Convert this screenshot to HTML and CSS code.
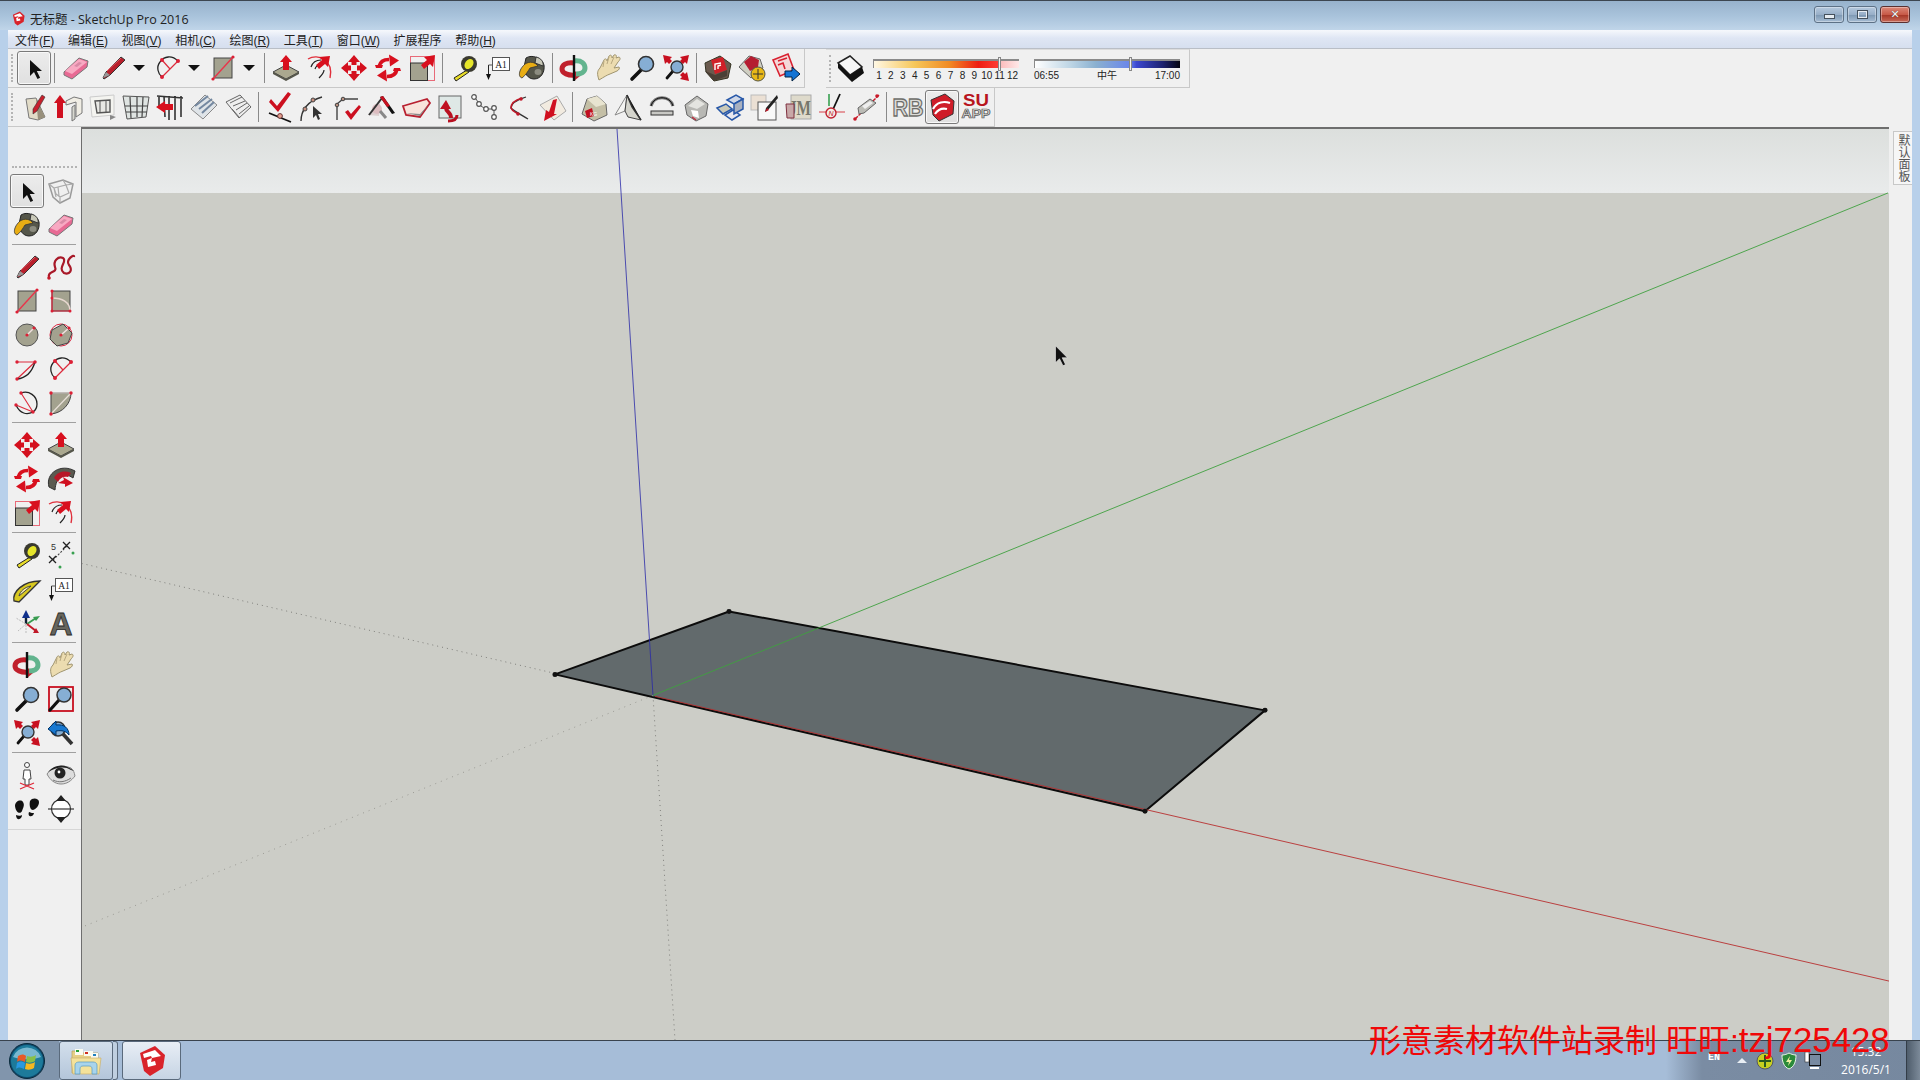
FILE: index.html
```html
<!DOCTYPE html>
<html lang="zh">
<head>
<meta charset="utf-8">
<title>无标题 - SketchUp Pro 2016</title>
<link rel="stylesheet" href="styles.css">
</head>
<body>
<svg class="defs" aria-hidden="true">
<defs>
<symbol id="select" viewBox="0 0 32 32"><path d="M12 8v16l4-4 3.5 7 2.6-1.2-3.3-6.8h5.2z" fill="#111"/></symbol>
<symbol id="eraser" viewBox="0 0 32 32"><path d="M4 20 19 6l9 3-1 6-15 12-8-4z" fill="#e86a94" stroke="#777"/><path d="M5 19 19 7l8 3-15 12z" fill="#f8a9c2"/><path d="m14 14 5-4 3 1-5 4z" fill="#d98aa6"/></symbol>
<symbol id="pencil" viewBox="0 0 32 32"><path d="m24 5 4 3-15 15-6 4-1-1 3-6z" fill="#b8202c" stroke="#333"/><path d="m6 26 3-6 4 3z" fill="#999"/><path d="m10 19 14-13" stroke="#e8606a"/></symbol>
<symbol id="arc2" viewBox="0 0 32 32"><path d="M26 9C20 3 12 4 8 10c-4 5-2 12 2 15" fill="none" stroke="#222" stroke-width="1.3"/><path d="M10 25 26 9M10 8l8 9" stroke="#dc2b3c" stroke-width="1.2"/><g fill="#dc2036"><circle cx="10" cy="8" r="2"/><circle cx="26" cy="9" r="2"/><circle cx="10" cy="25" r="2"/></g></symbol>
<symbol id="rect" viewBox="0 0 32 32"><rect x="7" y="6" width="18" height="20" fill="#a3a28f" stroke="#444"/><path d="M6 27 26 5" stroke="#e8354a" stroke-width="1.4"/><g fill="#dc2036"><circle cx="6" cy="27" r="1.6"/><circle cx="26" cy="5" r="1.6"/></g></symbol>
<symbol id="push" viewBox="0 0 32 32"><path d="m3 20 13-7 13 7-13 7z" fill="#aaa88f" stroke="#444"/><path d="M3 20v2l13 7 13-7v-2l-13 7z" fill="#55564a"/><path d="m16 3 6 7h-3v8h-6v-8h-3z" fill="#d8101e"/></symbol>
<symbol id="follow" viewBox="0 0 32 32"><path d="M4 7c10-6 26 1 22 19" fill="none" stroke="#e0303c" stroke-width="1.4"/><path d="M7 15c2-6 6-7 10-7M15 26c3-3 5-6 5-8M11 17c1-3 3-4 5-4" fill="none" stroke="#222" stroke-width="1.2"/><path d="m26 4-2 11-3-3-6 5-3-4 6-5-3-3z" fill="#d8101e"/></symbol>
<symbol id="move" viewBox="0 0 32 32"><g fill="#d4101e"><path d="m16 3 6 7h-3.500v3h-5v-3H10z"/><path d="m16 29-6-7h3.500v-3h5v3H22z"/><path d="m3 16 7-6v3.500h3v5h-3V22z"/><path d="m29 16-7 6v-3.500h-3v-5h3V10z"/></g></symbol>
<symbol id="rotate" viewBox="0 0 32 32"><g fill="none" stroke="#d8101e" stroke-width="3.600"><path d="M7 14.500C8 10 12 7.500 17 7.500"/><path d="M25 17.500C24 22 20 24.500 15 24.500"/></g><g fill="#d8101e"><path d="m17 2.500 10 6-9 6z"/><path d="m15 29.500-10-6 9-6z"/><path d="m3 13 8 0-1 3H4z"/><path d="m29 19-8 0 1-3h6z"/></g></symbol>
<symbol id="scale" viewBox="0 0 32 32"><rect x="4.500" y="4.500" width="24" height="24" fill="none" stroke="#e86a78"/><rect x="4.500" y="11" width="17" height="17.500" fill="#a3a28f" stroke="#333"/><path d="m29 3-2 12-3-3-6 5-3-4 6-5-3-3z" fill="#d8101e"/></symbol>
<symbol id="tape" viewBox="0 0 32 32"><path d="m19 18-13 8 2 3 13-9z" fill="#e8dc28" stroke="#222"/><circle cx="21" cy="12" r="8" fill="#3a3a30"/><ellipse cx="21" cy="12" rx="4" ry="5.500" transform="rotate(35 21 12)" fill="#e6e62a"/></symbol>
<symbol id="atext" viewBox="0 0 32 32"><rect x="10.500" y="5.500" width="17" height="13" fill="#fff" stroke="#555"/><text x="19" y="15.500" font-family="Liberation Serif" font-size="9.500" text-anchor="middle" fill="#222">A1</text><path d="M6.500 13v13" stroke="#222"/><path d="m4 22 5 0-2.500 6z" fill="#111"/><path d="M6.500 13h4" stroke="#555"/></symbol>
<symbol id="bucket" viewBox="0 0 32 32"><path d="M10 6c6-4 16 0 18 7 1 7-3 14-10 14-6 0-10-6-10-12z" fill="#55564a" stroke="#222"/><path d="M20 5c5 1 8 5 7 9l-8-3z" fill="#c8c8b8" stroke="#333"/><ellipse cx="22" cy="20" rx="3.500" ry="3" fill="#8c8c80"/><path d="M9 12c5-3 10-2 13 2l-8 2c-2 3-4 7-8 10-3-1-3-4-2-7 1-3 3-5 5-7z" fill="#e8ad14" stroke="#333" stroke-width=".8"/></symbol>
<symbol id="orbit" viewBox="0 0 32 32"><path d="M16 11C8 10 4 13 4 17c0 4 6 7 14 6" fill="none" stroke="#c0202c" stroke-width="5"/><path d="m16 18 6 6-6 5z" fill="#c0202c"/><path d="M16 9c8-1 11 3 11 7 0 4-4 6-9 6" fill="none" stroke="#62b48e" stroke-width="5"/><path d="M16 3v26" stroke="#111" stroke-width="2.400"/></symbol>
<symbol id="hand" viewBox="0 0 32 32"><path d="M7 28c-2-6-2-9 1-12l4-8c1-2 3-1 3 1l2-5c2-2 3 0 3 2l2-3c2-1 3 1 2 3l3-1c2 1 1 3-1 5l-4 6 5-1c1 1 0 3-2 4l-7 3c-3 1-6 3-11 6z" fill="#ecdcb0" stroke="#a09570"/><path d="m12 9-1 6M17 5l-2 7M22 5l-3 7" stroke="#b8a880" fill="none"/></symbol>
<symbol id="zoom" viewBox="0 0 32 32"><path d="m16 17-10 10" stroke="#111" stroke-width="3.600" stroke-linecap="round"/><circle cx="20" cy="12" r="7.500" fill="#86aed4" stroke="#333" stroke-width="1.600"/></symbol>
<symbol id="zoomext" viewBox="0 0 32 32"><path d="m13 19-6 7" stroke="#111" stroke-width="2.800" stroke-linecap="round"/><circle cx="17" cy="15" r="6" fill="#86aed4" stroke="#333" stroke-width="1.400"/><g fill="#c81020"><path d="m3 3 9 2-2 2 2 2-3 3-2-2-2 2z"/><path d="m29 3-2 9-2-2-2 2-3-3 2-2-2-2z"/><path d="m29 29-9-2 2-2-2-2 3-3 2 2 2-2z"/></g></symbol>
<symbol id="ware" viewBox="0 0 32 32"><path d="m3 11 15-7 11 8-3 14-14 3-8-9z" fill="#6a5a4e" stroke="#332"/><path d="m9 8 12-3 4 13-12 4z" fill="#d02028"/><path d="M13 18v-6l6-1M16 17v-3l3-1" fill="none" stroke="#fff" stroke-width="1.400"/><path d="m3 19 10 4 12-5v6l-13 5z" fill="#4a4036"/></symbol>
<symbol id="share" viewBox="0 0 32 32"><path d="m3 15 10-11 11 3 3 9-12 10z" fill="#cfcfc2" stroke="#666"/><path d="m8 10 7-6 8 4-1 7-8 4z" fill="#b51c30"/><circle cx="22" cy="22" r="7" fill="#e8b818" stroke="#554"/><path d="M22 17v10M17 22h10" stroke="#333"/></symbol>
<symbol id="layout" viewBox="0 0 32 32"><path d="m3 8 15-6 6 16-14 6z" fill="#f4d8d8" stroke="#d82030" stroke-width="1.600"/><path d="M8 9l9-3M8 13l5-2 2 6" fill="none" stroke="#d82030" stroke-width="1.600"/><path d="M15 19h7v-4l8 7-8 7v-4h-7z" fill="#1474d4" stroke="#024"/></symbol>
<symbol id="sb" viewBox="0 0 32 32"><path d="m4 10 12-7 12 11-12 8z" fill="#f6f6f6" stroke="#222" stroke-width="1.500"/><path d="m4 10 0 5 14 14 12-9-2-6-12 8z" fill="#111"/></symbol>
<symbol id="w1" viewBox="0 0 32 32"><path d="m8 8 10-1 9 19-7 3-9-2z" fill="#e2dcc8" stroke="#777"/><path d="m20 29-2-22 9 19z" fill="#98907c"/><path d="m24 4 3 2-8 14-4 3 0-5z" fill="#c8202c" stroke="#333" stroke-width=".6"/></symbol>
<symbol id="w2" viewBox="0 0 32 32"><path d="m14 10 8-4 8 2v14l-6 4v-15l-10 3z" fill="#f0ede4" stroke="#777"/><path d="M20 16v14l3-2V14z" fill="#d8d8d0" stroke="#777"/><path d="m8 4 6 8h-3v15H5V12H2z" fill="#d01020"/></symbol>
<symbol id="w3" viewBox="0 0 32 32"><path d="m4 6 24-2v20l-22 2z" fill="#f4f4f0" stroke="#ccc"/><path d="m9 10 15-1v12l-13 1z" fill="#e8e8e4" stroke="#555" stroke-width="1.400"/><path d="M14 10v12M20 10v11" stroke="#555"/><path d="m24 24 6 2-6 3z" fill="#888"/></symbol>
<symbol id="w4" viewBox="0 0 32 32"><path d="m3 5 26 1-3 20-19 2z" fill="#dfe4e2" stroke="#555"/><path d="M10 6l1 21M17 6l0 20M23 6l-1 20M5 15h23M6 21h21" stroke="#444" stroke-width="1.200"/></symbol>
<symbol id="w5" viewBox="0 0 32 32"><path d="M5 5v12M10 5l1 21M15 5v24M21 5v24M27 5v21M3 5l26 2" stroke="#333" stroke-width="1.600"/><path d="m2 16 9-6v3h8v6h-8v3z" fill="#d8101e"/></symbol>
<symbol id="w6" viewBox="0 0 32 32"><path d="m3 18 14-14 12 10-14 14z" fill="#dfe4e8" stroke="#888"/><path d="m7 15 13-10M11 18 24 8M14 22 26 11" stroke="#7488a0" stroke-width="2"/></symbol>
<symbol id="w7" viewBox="0 0 32 32"><path d="m4 11 14-7 11 12-12 11z" fill="#eee" stroke="#666"/><path d="m8 12 12-6M11 15l12-5M14 19l11-7M17 23l10-8M10 18l8 9" stroke="#666"/></symbol>
<symbol id="w8" viewBox="0 0 32 32"><path d="m5 22 22 9" stroke="#111" stroke-width="1.800"/><path d="m8 10 6 7 11-14 3 2-13 18-9-10z" fill="#cc1020" transform="translate(-1 -2)"/><circle cx="16" cy="25" r="2.400" fill="#e8a090" stroke="#633"/></symbol>
<symbol id="w9" viewBox="0 0 32 32"><path d="M3 30c0-10 6-20 21-24" fill="none" stroke="#333" stroke-width="1.400"/><circle cx="7" cy="18" r="2" fill="#c89080" stroke="#444"/><circle cx="15" cy="9" r="2" fill="#c89080" stroke="#444"/><path d="m15 15 0 12 3-3 2 5 2-1-2-5 4 0z" fill="#333"/></symbol>
<symbol id="w10" viewBox="0 0 32 32"><path d="M5 29V13l6-5h15" fill="none" stroke="#444" stroke-width="1.400"/><circle cx="5" cy="14" r="1.800" fill="#b89080" stroke="#444"/><circle cx="11" cy="8" r="1.800" fill="#b89080" stroke="#444"/><path d="m13 21 3-2 3 4 8-9 2 2-10 13z" fill="#cc1020"/></symbol>
<symbol id="w11" viewBox="0 0 32 32"><path d="M2 24 14 12l-1 13z" fill="#d8c8c8" opacity=".8"/><circle cx="11" cy="18" r="5" fill="#dcbcc0"/><path d="M3 24 16 7" stroke="#333" stroke-width="2"/><path d="m14 6 3-1 12 17-3 1z" fill="#111"/><path d="m14 6 3-1 7 10-3 1z" fill="#c81020"/><path d="m14 20 6 7" stroke="#888" stroke-width="3"/></symbol>
<symbol id="w12" viewBox="0 0 32 32"><path d="m3 15 24-7 3 4-10 14-14-2z" fill="#f8e4dc" stroke="#b82030" stroke-width="1.800"/><path d="m6 22 14 3 9-12-9 10z" fill="#888"/></symbol>
<symbol id="w13" viewBox="0 0 32 32"><rect x="5" y="5" width="22" height="22" fill="#dfe8e6" stroke="#666"/><path d="M17 27c0-6-5-6-5-10" fill="none" stroke="#b81020" stroke-width="4"/><path d="m12 9-6 9h11z" fill="#c01020"/><path d="M14 30c6 0 9-2 9-6" fill="none" stroke="#b81020" stroke-width="3"/></symbol>
<symbol id="w14" viewBox="0 0 32 32"><g fill="#fff" stroke="#555" stroke-width="1.200"><circle cx="6" cy="6" r="2.300"/><circle cx="11" cy="13" r="2.300"/><circle cx="18" cy="18" r="2.300"/><circle cx="26" cy="17" r="2.300"/><circle cx="26" cy="26" r="2.300"/></g><path d="m8 8 2 3M13 15l3 2M20 18h4M26 19v5" stroke="#555"/></symbol>
<symbol id="w15" viewBox="0 0 32 32"><path d="M24 6C15 9 9 13 9 17c3 3 9 6 17 11" fill="none" stroke="#333" stroke-width="1.300"/><path d="M20 7c-7 2-11 6-11 10 1 3 4 4 7 6" fill="none" stroke="#c01828" stroke-width="1.500"/><circle cx="19" cy="8" r="1.800" fill="#c01828"/><circle cx="16" cy="23" r="1.800" fill="#c01828"/></symbol>
<symbol id="w16" viewBox="0 0 32 32"><path d="m4 14 17-9 9 15-12 9z" fill="#f2ebe0" stroke="#aaa"/><path d="m24 8-3 15 3 0-13 7 2-11 3 2 4-12z" fill="#d01020" transform="translate(-3 0)"/></symbol>
<symbol id="m1" viewBox="0 0 32 32"><path d="m4 23 5-15 10-3 9 8 1 11-13 6z" fill="#c4bfa6" stroke="#666"/><path d="m9 8 10-3 9 8-10 3z" fill="#e8e4d0"/><path d="m7 20 7-3 2 8-7 2z" fill="#c01020"/><text x="12" y="25" font-family="Liberation Sans" font-size="5" fill="#fff">KG</text></symbol>
<symbol id="m2" viewBox="0 0 32 32"><path d="M3 24 15 4l-2 16z" fill="#f4f4f2" stroke="#888"/><path d="m15 4 14 25-13-3-3-6z" fill="#d4d4cc" stroke="#444"/><path d="m15 4 5 12 9 13" stroke="#333" stroke-width="1.500"/></symbol>
<symbol id="m3" viewBox="0 0 32 32"><path d="M5 15C8 4 24 4 27 15" fill="none" stroke="#777" stroke-width="3"/><path d="M5 15C8 4 24 4 27 15" fill="none" stroke="#111" stroke-width="1"/><rect x="5" y="20" width="22" height="4" fill="#c8c8c4" stroke="#333"/></symbol>
<symbol id="m4" viewBox="0 0 32 32"><path d="m5 14 12-9 11 8-2 12-10 5-9-6z" fill="#b8b8b4" stroke="#666"/><path d="m8 15 9-7 8 5-8 5z" fill="#e4e4e0"/><path d="m11 19 7 1 1 7-6-2z" fill="#fff"/><path d="m12 26 4 3" stroke="#c03040" stroke-width="1.500"/></symbol>
<symbol id="m5" viewBox="0 0 32 32"><path d="m3 17 9-4 6 5-9 5z" fill="#c8c8b8" stroke="#2858a8" stroke-width="1.500"/><path d="m13 9 9-5 7 4-9 5z" fill="#d0d8e8" stroke="#2858a8" stroke-width="1.500"/><path d="m11 24 8-5 7 5-8 5z" fill="#e8e8f0" stroke="#2858a8" stroke-width="1.500"/><path d="m20 13 9-5v10l-9 5z" fill="#a8b0c0" stroke="#2858a8" stroke-width="1.500"/></symbol>
<symbol id="m6" viewBox="0 0 32 32"><rect x="3" y="4" width="15" height="15" fill="#ebe0d4" stroke="#bbb"/><rect x="10" y="11" width="18" height="18" fill="#f8f8f8" stroke="#555"/><path d="m29 4 1 3-10 12-3 2 1-4z" fill="#222"/><path d="m17 21 2-4 2 2z" fill="#c01020"/></symbol>
<symbol id="m7" viewBox="0 0 32 32"><rect x="9" y="4" width="20" height="24" fill="#dedacb" stroke="#aaa"/><text x="18" y="24" font-family="Liberation Serif" font-size="20" font-weight="700" text-anchor="middle" fill="#77776c" textLength="22" lengthAdjust="spacingAndGlyphs">JM</text><path d="M4 13h8v14H5z" fill="#c8a8a8" stroke="#803040"/></symbol>
<symbol id="m8" viewBox="0 0 32 32"><path d="M13 3v12" stroke="#38a050" stroke-width="1.600"/><path d="M24 3 14 25" stroke="#111" stroke-width="1.800"/><path d="M3 21h26" stroke="#d84048"/><circle cx="15" cy="22" r="5" fill="#f4ece4" stroke="#c02030" stroke-width="1.400"/><text x="15" y="25" font-family="Liberation Sans" font-size="7" font-style="italic" text-anchor="middle" fill="#c02030">N</text></symbol>
<symbol id="m9" viewBox="0 0 32 32"><path d="m5 28 24-24" stroke="#c81828" stroke-width="1.400" stroke-dasharray="4 1"/><path d="m8 17 12-9 6 4-12 10-5 1z" fill="#bcbcb6" stroke="#666"/><path d="m12 15 8-5 3 2-8 6z" fill="#eee"/><circle cx="5" cy="28" r="1.800" fill="#c81828"/><circle cx="27" cy="5" r="1.800" fill="#c81828"/></symbol>
<symbol id="rb" viewBox="0 0 32 32"><text x="16" y="25" font-family="Liberation Sans" font-size="24" font-weight="700" text-anchor="middle" fill="#dcdcd8" stroke="#6e6e6a" stroke-width="1.300" textLength="31" lengthAdjust="spacingAndGlyphs">RB</text></symbol>
<symbol id="sulogo" viewBox="0 0 32 32"><path d="M5 9 19 3l9 7-1 13-14 7-6-6z" fill="#cf1c28" stroke="#333"/><path d="M7 18c4-7 11-8 17-6M9 23c4-6 8-6 12-5" fill="none" stroke="#fff" stroke-width="2.200"/></symbol>
<symbol id="suapp" viewBox="0 0 32 32"><text x="16" y="15" font-family="Liberation Sans" font-size="17" font-weight="700" text-anchor="middle" fill="#b8141e" textLength="26" lengthAdjust="spacingAndGlyphs">SU</text><text x="16" y="27" font-family="Liberation Sans" font-size="12" font-weight="700" text-anchor="middle" fill="#dededa" stroke="#555" stroke-width=".7" textLength="29" lengthAdjust="spacingAndGlyphs">APP</text></symbol>
<symbol id="comp" viewBox="0 0 32 32"><path d="M4 9l14-4 10 4-3 14-10 5-7-6z" fill="none" stroke="#9a9a9a" stroke-width="1.500"/><path d="M9 13l12-3 3 8-9 4-4-3zM4 9l5 4M28 9l-7 1M15 28v-6M11 22l-2-9M18 5l3 5M13 12l1 9" fill="none" stroke="#aaa" stroke-width="1.200"/></symbol>
<symbol id="free" viewBox="0 0 32 32"><path d="M4 26c-2-6 9-4 6-10-2-6 3-11 8-9 5 3-6 10 1 15 6 2 9-3 5-8-4-5 6-12 5-8" fill="none" stroke="#a81828" stroke-width="2.200"/><circle cx="4" cy="27" r="1.800" fill="#c81828"/></symbol>
<symbol id="rrect" viewBox="0 0 32 32"><rect x="7" y="6" width="18" height="20" fill="#a3a28f" stroke="#444"/><path d="M7 13c10 0 18 4 18 13" fill="none" stroke="#e8d8d0" stroke-width="1.500"/><path d="M7 5v21h18" fill="none" stroke="#e02840" stroke-width="1.200"/><g fill="#dc2036"><circle cx="7" cy="6" r="1.500"/><circle cx="7" cy="13" r="1.500"/><circle cx="7" cy="26" r="1.500"/><circle cx="25" cy="26" r="1.500"/></g></symbol>
<symbol id="circle" viewBox="0 0 32 32"><circle cx="16" cy="16" r="11" fill="#a3a28f" stroke="#555"/><path d="m16 16 7-7" stroke="#f0e0e0" stroke-width="1.500"/><circle cx="16" cy="16" r="1.600" fill="#dc2036"/><circle cx="23" cy="9" r="1.600" fill="#dc2036"/></symbol>
<symbol id="poly" viewBox="0 0 32 32"><circle cx="16" cy="16" r="11" fill="none" stroke="#d82840"/><path d="m7 11 11-6 9 9-4 10-11 3-7-7z" fill="#a3a28f" stroke="#444"/><path d="m16 16 8-7" stroke="#f0e0e0" stroke-width="1.500"/><circle cx="16" cy="16" r="1.600" fill="#dc2036"/><circle cx="24" cy="9" r="1.600" fill="#dc2036"/></symbol>
<symbol id="arc1" viewBox="0 0 32 32"><path d="M6 9h18L6 26" fill="none" stroke="#dc2b3c" stroke-width="1.200"/><path d="M6 26c10-1 15-7 18-17" fill="none" stroke="#222" stroke-width="1.300"/><g fill="#dc2036"><circle cx="6" cy="9" r="1.700"/><circle cx="24" cy="9" r="1.700"/><circle cx="6" cy="26" r="1.700"/></g></symbol>
<symbol id="arc3" viewBox="0 0 32 32"><path d="m5 18 17 7M10 6l12 19" fill="none" stroke="#dc2b3c" stroke-width="1.100"/><path d="M10 6c8-3 16 3 16 11 0 3-1 6-4 8-6 3-13 2-17-7" fill="none" stroke="#222" stroke-width="1.300"/><g fill="#dc2036"><circle cx="10" cy="6" r="1.700"/><circle cx="5" cy="18" r="1.700"/><circle cx="22" cy="25" r="1.700"/></g></symbol>
<symbol id="sector" viewBox="0 0 32 32"><path d="M6 6h20c0 10-8 20-20 21z" fill="#a3a28f" stroke="#444"/><path d="M6 6h20L6 27" fill="none" stroke="#e8e0d8" stroke-width="1.200"/><g fill="#dc2036"><circle cx="6" cy="27" r="1.700"/><circle cx="26" cy="6" r="1.700"/><circle cx="6" cy="6" r="1.700"/></g></symbol>
<symbol id="swoosh" viewBox="0 0 32 32"><path d="M4 24C0 10 16 0 30 8l-2 7C18 8 11 14 10 27z" fill="#5a5a50" stroke="#333"/><path d="M9 15c3-6 10-8 17-5l-3 4c-5-1-8 1-10 5z" fill="#b81828"/><path d="m18 14 10 6-8 4 0-3-7-1 6-3z" fill="#d01020"/></symbol>
<symbol id="dim" viewBox="0 0 32 32"><path d="m8 21 14-14" stroke="#444" stroke-dasharray="2 1.500" stroke-width="1.100"/><path d="m18 3 7 7M25 3l-7 7M4 17l7 7M11 17l-7 7" stroke="#222" stroke-width="1.300"/><circle cx="28" cy="14" r="1.500" fill="#38a050"/><circle cx="15" cy="28" r="1.500" fill="#38a050"/><text x="6" y="11" font-family="Liberation Sans" font-size="9" fill="#333">5</text></symbol>
<symbol id="proto" viewBox="0 0 32 32"><path d="M3 28c-2-9 9-20 26-20L8 29z" fill="#d8c820" stroke="#333" stroke-width="1.400"/><path d="M8 23c1-5 6-9 12-10z" fill="#f4ecb0" stroke="#444"/></symbol>
<symbol id="axes" viewBox="0 0 32 32"><path d="M15 17V9" stroke="#123" stroke-width="2.400"/><path d="m15 3 4 8h-8z" fill="#10308c"/><path d="m16 17 9-6" stroke="#389c50" stroke-width="1.800"/><path d="m16 17 9 7" stroke="#c01828" stroke-width="2"/><path d="m28 26-6 0 3-5z" fill="#c01828"/><path d="m29 9-7 1 3 4z" fill="#389c50"/><path d="M15 17 5 11M15 17 7 24M15 18v9" stroke="#bbb" stroke-dasharray="2 1"/></symbol>
<symbol id="a3d" viewBox="0 0 32 32"><text x="16" y="28" font-family="Liberation Sans" font-size="32" font-weight="700" text-anchor="middle" fill="#66665e" stroke="#2a2a28" stroke-width=".8" textLength="23" lengthAdjust="spacingAndGlyphs">A</text></symbol>
<symbol id="zoomwin" viewBox="0 0 32 32"><rect x="4" y="4" width="24" height="24" fill="none" stroke="#c81020" stroke-width="1.800"/><path d="m14 17-9 10" stroke="#111" stroke-width="3.200" stroke-linecap="round"/><circle cx="19" cy="12" r="7" fill="#86aed4" stroke="#333" stroke-width="1.500"/></symbol>
<symbol id="prev" viewBox="0 0 32 32"><circle cx="13" cy="12" r="7" fill="#86aed4" stroke="#333" stroke-width="1.500"/><path d="m18 17 9 10" stroke="#333" stroke-width="3.600"/><path d="M3 12 11 4v4c8-1 13 3 13 10-3-4-7-5-13-4v4z" fill="#1878d0" stroke="#036"/></symbol>
<symbol id="person" viewBox="0 0 32 32"><circle cx="16" cy="6" r="2.500" fill="#fff" stroke="#444"/><path d="M13 11h6l1 9h-2v6h-4v-6h-2z" fill="#fff" stroke="#444"/><path d="m9 24 14 6M23 24 9 30" stroke="#e02838" stroke-width="1.200"/></symbol>
<symbol id="eye" viewBox="0 0 32 32"><path d="M2 15c6-9 17-9 24-6 3 3 3 4 4 8-4 5-8 8-14 8-6 0-11-4-14-10z" fill="#ddd" stroke="#888"/><path d="M3 13c8-9 18-8 26-1l-3-1C19 6 10 9 3 13z" fill="#222"/><circle cx="15" cy="14" r="5.500" fill="#222"/><circle cx="14" cy="13" r="1.400" fill="#fff"/><path d="M8 21c6 3 12 2 18-2" stroke="#777" fill="none"/></symbol>
<symbol id="walk" viewBox="0 0 32 32"><g fill="#111"><path d="M4 13c0-5 6-7 8-4s0 6-1 9-6 3-7-5z"/><path d="M5 22c2 1 5 1 6 0 0 5-6 6-6 0z"/><path d="M19 8c2-4 9-3 9 1 0 4-3 7-6 8-3 0-4-5-3-9z"/><path d="M18 19c2 1 4 1 5 1-1 5-7 4-5-1z"/></g></symbol>
<symbol id="section" viewBox="0 0 32 32"><circle cx="16" cy="16" r="9.500" fill="#fff" stroke="#333" stroke-width="1.200"/><path d="M3 16h26" stroke="#333" stroke-width="1.200"/><path d="m16 2 5 6H11zM16 30l5-6H11z" fill="#222"/></symbol>
<symbol id="su" viewBox="0 0 32 32"><path d="m4 8 15-7 10 9-2 13-13 8-6-5z" fill="#d9232a"/><path d="m7 9 12-4 6 6-9 2-1 4 4-1 1 4-8 2-1-7 5-2-1-2-7 2z" fill="#fff"/></symbol>
<symbol id="orb" viewBox="0 0 36 36"><circle cx="18" cy="18" r="17.500" fill="#0e4a6e" stroke="#0a2a3a"/><circle cx="18" cy="18" r="16" fill="#1d7a9a"/><path d="M4 14a15 15 0 0 1 28 0c-8 3-20 3-28 0z" fill="#7ab8d0"/><path d="M9 13c3-2 6-2 8 0l-1 6c-3-2-6-2-8 0z" fill="#e85a28"/><path d="M18 13c3 1 6 1 9-1l-1 6c-3 2-6 2-9 1z" fill="#88c048"/><path d="M8 20c3-2 5-2 8 0l-1 6c-3-2-6-2-8 0z" fill="#2898e0"/><path d="M17 20c3 1 6 1 9-1l-1 6c-3 2-6 2-9 1z" fill="#f4b820"/></symbol>
<symbol id="folder" viewBox="0 0 32 32"><path d="M2 6h9l2 2h15v20H2z" fill="#e6cf86" stroke="#b8a060" stroke-width=".7"/><rect x="5" y="4" width="8" height="6" fill="#fafaf0"/><rect x="6" y="5" width="3" height="2" fill="#28a030"/><rect x="14" y="6" width="9" height="5" fill="#fafaf0"/><rect x="15" y="7" width="3" height="2" fill="#d03020"/><rect x="21" y="8" width="7" height="5" fill="#fafaf0"/><rect x="23" y="9" width="3" height="2" fill="#2080c0"/><path d="M1 13h30l-2 16H3z" fill="#f4e29a" stroke="#c8b070" stroke-width=".7"/><path d="M5 29v-9c0-2 2-3 4-3h14c2 0 4 1 4 3v9h-5v-5c0-2-1-3-3-3h-6c-2 0-3 1-3 3v5z" fill="#a8d4ec" stroke="#5898c0" stroke-width=".7"/></symbol>
<symbol id="tray1" viewBox="0 0 18 18"><circle cx="9" cy="9" r="8" fill="#c8d020" stroke="#556"/><path d="M8 3h2v5h5v2h-5v5H8v-5H3V8h5z" fill="#2a5a20"/></symbol>
<symbol id="tray2" viewBox="0 0 18 18"><path d="M2 3c3 0 5-1 7-2 2 1 4 2 7 2 0 7-2 12-7 14C4 15 2 10 2 3z" fill="#2a8a3a" stroke="#e8f4e8"/><path d="m10 4-4 6h3l-1 4 4-6H9z" fill="#f0f0a0"/></symbol>
<symbol id="tray3" viewBox="0 0 18 18"><rect x="5.500" y="2.500" width="11" height="11" fill="none" stroke="#111"/><rect x="1" y="0" width="4" height="10" fill="#fff" stroke="#333" stroke-width=".6"/><path d="M6 16h9" stroke="#fff" stroke-width="2"/></symbol>
</defs>
</svg>

<div class="screen">
  <div class="window">
    <header class="titlebar">
      <svg class="title-icon"><use href="#su"/></svg>
      <span class="title-text">无标题 - SketchUp Pro 2016</span>
      <div class="win-buttons">
        <span class="win-btn"><i class="glyph-min"></i></span>
        <span class="win-btn"><i class="glyph-max"></i></span>
        <span class="win-btn close"><i class="glyph-close">✕</i></span>
      </div>
    </header>
    <div class="client">
      <nav class="menubar">
        <span>文件(<u>F</u>)</span><span>编辑(<u>E</u>)</span><span>视图(<u>V</u>)</span><span>相机(<u>C</u>)</span><span>绘图(<u>R</u>)</span><span>工具(<u>T</u>)</span><span>窗口(<u>W</u>)</span><span>扩展程序</span><span>帮助(<u>H</u>)</span>
      </nav>

      <div class="tool-row first">
        <div class="toolbar main">
          <span class="grip"></span>
          <span class="btn on"><svg class="ic"><use href="#select"/></svg></span>
          <i class="vsep"></i>
          <span class="btn"><svg class="ic"><use href="#eraser"/></svg></span>
          <span class="gap3"></span>
          <span class="btn"><svg class="ic"><use href="#pencil"/></svg></span><span class="dd"></span>
          <span class="btn"><svg class="ic"><use href="#arc2"/></svg></span><span class="dd"></span>
          <span class="btn"><svg class="ic"><use href="#rect"/></svg></span><span class="dd"></span>
          <i class="vsep"></i>
          <span class="btn"><svg class="ic"><use href="#push"/></svg></span>
          <span class="btn"><svg class="ic"><use href="#follow"/></svg></span>
          <span class="btn"><svg class="ic"><use href="#move"/></svg></span>
          <span class="btn"><svg class="ic"><use href="#rotate"/></svg></span>
          <span class="btn"><svg class="ic"><use href="#scale"/></svg></span>
          <i class="vsep"></i>
          <span class="btn"><svg class="ic"><use href="#tape"/></svg></span>
          <span class="btn"><svg class="ic"><use href="#atext"/></svg></span>
          <span class="btn"><svg class="ic"><use href="#bucket"/></svg></span>
          <i class="vsep"></i>
          <span class="btn"><svg class="ic"><use href="#orbit"/></svg></span>
          <span class="btn"><svg class="ic"><use href="#hand"/></svg></span>
          <span class="btn"><svg class="ic"><use href="#zoom"/></svg></span>
          <span class="btn"><svg class="ic"><use href="#zoomext"/></svg></span>
          <i class="vsep"></i>
          <span class="btn"><svg class="ic"><use href="#ware"/></svg></span>
          <span class="btn"><svg class="ic"><use href="#share"/></svg></span>
          <span class="btn"><svg class="ic"><use href="#layout"/></svg></span>
        </div>
        <div class="toolbar shadow">
          <span class="grip"></span>
          <span class="btn"><svg class="ic"><use href="#sb"/></svg></span>
          <div class="slider-col months">
            <div class="track"><i class="thumb"></i></div>
            <div class="ticks"><span>1</span><span>2</span><span>3</span><span>4</span><span>5</span><span>6</span><span>7</span><span>8</span><span>9</span><span>10</span><span>11</span><span>12</span></div>
          </div>
          <div class="slider-col hours">
            <div class="track"><i class="thumb"></i></div>
            <div class="times"><span>06:55</span><span>中午</span><span>17:00</span></div>
          </div>
        </div>
      </div>

      <div class="tool-row">
        <div class="toolbar second">
          <span class="grip"></span>
          <span class="btn"><svg class="ic"><use href="#w1"/></svg></span>
          <span class="btn"><svg class="ic"><use href="#w2"/></svg></span>
          <span class="btn"><svg class="ic"><use href="#w3"/></svg></span>
          <span class="btn"><svg class="ic"><use href="#w4"/></svg></span>
          <span class="btn"><svg class="ic"><use href="#w5"/></svg></span>
          <span class="btn"><svg class="ic"><use href="#w6"/></svg></span>
          <span class="btn"><svg class="ic"><use href="#w7"/></svg></span>
          <i class="vsep"></i>
          <span class="btn"><svg class="ic"><use href="#w8"/></svg></span>
          <span class="btn"><svg class="ic"><use href="#w9"/></svg></span>
          <span class="btn"><svg class="ic"><use href="#w10"/></svg></span>
          <span class="btn"><svg class="ic"><use href="#w11"/></svg></span>
          <span class="btn"><svg class="ic"><use href="#w12"/></svg></span>
          <span class="btn"><svg class="ic"><use href="#w13"/></svg></span>
          <span class="btn"><svg class="ic"><use href="#w14"/></svg></span>
          <span class="btn"><svg class="ic"><use href="#w15"/></svg></span>
          <span class="btn"><svg class="ic"><use href="#w16"/></svg></span>
          <i class="vsep"></i>
          <span class="btn"><svg class="ic"><use href="#m1"/></svg></span>
          <span class="btn"><svg class="ic"><use href="#m2"/></svg></span>
          <span class="btn"><svg class="ic"><use href="#m3"/></svg></span>
          <span class="btn"><svg class="ic"><use href="#m4"/></svg></span>
          <span class="btn"><svg class="ic"><use href="#m5"/></svg></span>
          <span class="btn"><svg class="ic"><use href="#m6"/></svg></span>
          <span class="btn"><svg class="ic"><use href="#m7"/></svg></span>
          <span class="btn"><svg class="ic"><use href="#m8"/></svg></span>
          <span class="btn"><svg class="ic"><use href="#m9"/></svg></span>
          <i class="vsep"></i>
          <span class="btn"><svg class="ic"><use href="#rb"/></svg></span>
          <span class="btn on"><svg class="ic"><use href="#sulogo"/></svg></span>
          <span class="btn"><svg class="ic"><use href="#suapp"/></svg></span>
        </div>
      </div>

      <div class="workspace">
        <aside class="palette">
          <div class="hgrip"></div>
          <div class="pal-grid">
            <span class="btn on"><svg class="ic"><use href="#select"/></svg></span>
            <span class="btn"><svg class="ic"><use href="#comp"/></svg></span>
            <span class="btn"><svg class="ic"><use href="#bucket"/></svg></span>
            <span class="btn"><svg class="ic"><use href="#eraser"/></svg></span>
            <i class="hsep"></i>
            <span class="btn"><svg class="ic"><use href="#pencil"/></svg></span>
            <span class="btn"><svg class="ic"><use href="#free"/></svg></span>
            <span class="btn"><svg class="ic"><use href="#rect"/></svg></span>
            <span class="btn"><svg class="ic"><use href="#rrect"/></svg></span>
            <span class="btn"><svg class="ic"><use href="#circle"/></svg></span>
            <span class="btn"><svg class="ic"><use href="#poly"/></svg></span>
            <span class="btn"><svg class="ic"><use href="#arc1"/></svg></span>
            <span class="btn"><svg class="ic"><use href="#arc2"/></svg></span>
            <span class="btn"><svg class="ic"><use href="#arc3"/></svg></span>
            <span class="btn"><svg class="ic"><use href="#sector"/></svg></span>
            <i class="hsep"></i>
            <span class="btn"><svg class="ic"><use href="#move"/></svg></span>
            <span class="btn"><svg class="ic"><use href="#push"/></svg></span>
            <span class="btn"><svg class="ic"><use href="#rotate"/></svg></span>
            <span class="btn"><svg class="ic"><use href="#swoosh"/></svg></span>
            <span class="btn"><svg class="ic"><use href="#scale"/></svg></span>
            <span class="btn"><svg class="ic"><use href="#follow"/></svg></span>
            <i class="hsep"></i>
            <span class="btn"><svg class="ic"><use href="#tape"/></svg></span>
            <span class="btn"><svg class="ic"><use href="#dim"/></svg></span>
            <span class="btn"><svg class="ic"><use href="#proto"/></svg></span>
            <span class="btn"><svg class="ic"><use href="#atext"/></svg></span>
            <span class="btn"><svg class="ic"><use href="#axes"/></svg></span>
            <span class="btn"><svg class="ic"><use href="#a3d"/></svg></span>
            <i class="hsep"></i>
            <span class="btn"><svg class="ic"><use href="#orbit"/></svg></span>
            <span class="btn"><svg class="ic"><use href="#hand"/></svg></span>
            <span class="btn"><svg class="ic"><use href="#zoom"/></svg></span>
            <span class="btn"><svg class="ic"><use href="#zoomwin"/></svg></span>
            <span class="btn"><svg class="ic"><use href="#zoomext"/></svg></span>
            <span class="btn"><svg class="ic"><use href="#prev"/></svg></span>
            <i class="hsep"></i>
            <span class="btn"><svg class="ic"><use href="#person"/></svg></span>
            <span class="btn"><svg class="ic"><use href="#eye"/></svg></span>
            <span class="btn"><svg class="ic"><use href="#walk"/></svg></span>
            <span class="btn"><svg class="ic"><use href="#section"/></svg></span>
          </div>
          <div class="pal-end"></div>
        </aside>

        <main class="viewport">
          <svg class="scene" viewBox="82 128 1807 912" preserveAspectRatio="none">
            <polygon class="face" points="555,674 729,611 1265,710 1145,811"/>
            <line class="dot-blue" x1="653" y1="695" x2="675" y2="1040"/>
            <line class="dot-green" x1="653" y1="695" x2="82" y2="927"/>
            <line class="dot-red" x1="555" y1="673" x2="82" y2="563"/>
            <line class="ax-blue" x1="617" y1="128" x2="653" y2="695"/>
            <line class="ax-green" x1="653" y1="695" x2="1888" y2="192"/>
            <line class="ax-red" x1="655" y1="696" x2="1889" y2="981"/>
            <circle class="vtx" cx="555" cy="674" r="2.500"/>
            <circle class="vtx" cx="729" cy="611" r="2.500"/>
            <circle class="vtx" cx="1265" cy="710" r="2.500"/>
            <circle class="vtx" cx="1145" cy="811" r="2.500"/>
            <path class="cursor" d="M1055.500 345v17l4-4 3.500 7 2.500-1.200-3.300-6.800h5.200z"/>
          </svg>
        </main>

        <aside class="trays">
          <div class="tray-tab">默认面板</div>
        </aside>
      </div>
    </div>
  </div>

  <footer class="taskbar">
    <div class="start"><svg class="orb"><use href="#orb"/></svg></div>
    <span class="task active"><svg class="task-ic"><use href="#folder"/></svg></span>
    <span class="task-stack"></span>
    <span class="task app"><svg class="task-ic"><use href="#su"/></svg></span>
    <div class="notify">
      <span class="lang">EN</span>
      <span class="up"></span>
      <svg class="tray-ic"><use href="#tray1"/></svg>
      <svg class="tray-ic"><use href="#tray2"/></svg>
      <svg class="tray-ic"><use href="#tray3"/></svg>
      <div class="clock"><span>15:32</span><span>2016/5/1</span></div>
      <span class="show-desktop"></span>
    </div>
  </footer>

  <div class="watermark">形意素材软件站录制 旺旺:<span class="wm-id">tzj725428</span></div>
</div>
</body>
</html>
```

FILE: styles.css
```css
* { box-sizing: border-box; }
html, body { margin: 0; padding: 0; }
body { font-family: "Liberation Sans", "Noto Sans CJK SC", sans-serif; overflow: hidden; background: #000; }
.defs { width: 0; height: 0; display: block; position: absolute; }

.screen { width: 1920px; height: 1080px; display: flex; flex-direction: column; position: relative; overflow: hidden; }
.window { flex: 1; min-height: 0; display: flex; flex-direction: column; background: #b8d0ea; }

.titlebar { height: 30px; display: flex; align-items: center; padding: 6px 10px 0 8px; border-top: 1px solid #3c4650; background: linear-gradient(180deg, #97b2cc 0%, #aac4dc 55%, #c0d5e9 100%); }
.title-icon { width: 15px; height: 15px; margin: 0 4px 0 3px; }
.title-text { font: 12.5px "Open Sans", "Noto Sans CJK SC", sans-serif; color: #222; }
.win-buttons { margin-left: auto; display: flex; gap: 3px; margin-top: -8px; margin-right: 0; }
.win-btn { width: 30px; height: 17px; border: 1px solid #5d7186; border-radius: 3px; background: linear-gradient(180deg, #b5c9de 0%, #98afc8 50%, #7f9ab5 55%, #a7bdd4 100%); display: flex; align-items: center; justify-content: center; box-shadow: inset 0 0 0 1px rgba(255,255,255,.35); }
.win-btn.close { background: linear-gradient(180deg, #dc8878 0%, #c85a48 50%, #a83828 55%, #c86a58 100%); border-color: #5a3030; }
.glyph-min { width: 11px; height: 5px; background: #e6ecf2; border: 1px solid #44505c; margin-top: 4px; }
.glyph-max { width: 11px; height: 9px; border: 2px solid #e6ecf2; outline: 1px solid #44505c; outline-offset: -1px; }
.glyph-close { font: 700 11px "DejaVu Sans", sans-serif; color: #f4f4f4; text-shadow: 0 0 1px #333; }

.client { flex: 1; min-height: 0; margin: 0 8px; display: flex; flex-direction: column; background: #f0f0f0; }

.menubar { height: 18px; display: flex; align-items: center; gap: 13.6px; padding-left: 7px; font-size: 12px; color: #222; background: linear-gradient(180deg, #f6f8fc 0%, #dfe6f4 45%, #d6dfef 100%); }
.menubar u { text-decoration-thickness: 1px; }

.tool-row { height: 39px; display: flex; align-items: stretch; }
.tool-row.first { border-top: 1px solid #b9bec6; height: 40px; }
.toolbar { display: flex; align-items: center; height: 100%; background: #f0f0f0; border-right: 1px solid #c8c8c8; border-bottom: 1px solid #c8c8c8; }
.toolbar.main { width: 797px; padding-left: 9px; position: relative; }
.toolbar.second { width: 987px; padding-left: 9px; position: relative; }
.toolbar.shadow { width: 364px; margin-left: 21px; padding-left: 7px; position: relative; border-top: 1px solid #dcdcdc; }
.grip { position: absolute; left: 3px; top: 5px; bottom: 5px; width: 2px; border-left: 2px dotted #b4b4b4; }

.btn { width: 34px; height: 34px; flex: none; display: flex; align-items: center; justify-content: center; }
.btn.on { border: 1px solid #7a7a7a; border-radius: 3px; background: linear-gradient(180deg, #ececec, #e0e0e0); box-shadow: inset 0 0 0 1px #f8f8f8; }
.ic { width: 32px; height: 32px; display: block; flex: none; }
.vsep { flex: none; width: 8px; height: 30px; background: linear-gradient(#8a8a8a, #8a8a8a) 3px 0 / 1px 100% no-repeat; }
.gap3 { width: 3px; flex: none; }
.dd { width: 21px; height: 34px; flex: none; position: relative; }
.dd::after { content: ""; position: absolute; left: 3px; top: 14px; border-left: 6px solid transparent; border-right: 6px solid transparent; border-top: 6px solid #111; }

.slider-col { flex: none; display: flex; flex-direction: column; gap: 2px; padding-top: 4px; font-size: 10px; color: #222; height: 100%; }
.slider-col.months { width: 146px; margin-left: 6px; margin-right: 15px; }
.slider-col.hours { width: 146px; }
.track { height: 9px; position: relative; border-top: 2px solid #8a8a8a; border-left: 1px solid #8a8a8a; margin-top: 5px; flex: none; }
.months .track { background: linear-gradient(90deg, #fff8e4 0%, #f6c75a 28%, #f08a24 52%, #ee1d12 72%, #ff3c34 86%, #fbbcbc 87%, #ffe8e8 100%); }
.hours .track { background: linear-gradient(90deg, #ffffff 0%, #bcd4e4 25%, #8ab0d0 42%, #6a86ea 65%, #3c48d0 70%, #1c2270 88%, #050510 100%); }
.thumb { position: absolute; top: -4px; width: 3px; height: 14px; background: #f0f0f0; border: 1px solid #888; }
.months .thumb { left: 124px; }
.hours .thumb { left: 94px; }
.ticks { display: flex; line-height: 12px; }
.ticks span { width: 12px; text-align: center; }
.ticks span:nth-child(n+10) { width: 13px; }
.times { display: flex; justify-content: space-between; line-height: 12px; }

.workspace { flex: 1; min-height: 0; display: flex; }

.palette { width: 73px; flex: none; padding-top: 39px; display: flex; flex-direction: column; background: #f0f0f0; }
.hgrip { height: 8px; margin: 0 4px; border-top: 2px dotted #b4b4b4; }
.pal-grid { display: grid; grid-template-columns: 34px 34px; grid-auto-rows: auto; padding-left: 2px; }
.hsep { grid-column: 1 / -1; height: 8px; margin: 0 2px; background: linear-gradient(#a0a0a0, #a0a0a0) 0 2px / 100% 1px no-repeat; }
.pal-end { margin-top: 3px; border-top: 1px solid #d6d6d6; flex: 1; }

.viewport { flex: 1; min-width: 0; border-top: 2px solid #6e6e6e; border-left: 1px solid #6e6e6e; background: linear-gradient(180deg, #dcdfdd 0, #e9ebeb 64px, #cccdc7 64px); }
.scene { display: block; width: 100%; height: 100%; }
.face { fill: #626a6c; stroke: #0c0c0c; stroke-width: 2; stroke-linejoin: round; }
.vtx { fill: #111; }
.ax-blue { stroke: #2a2aa8; stroke-width: .8; }
.ax-green { stroke: #3fa03f; stroke-width: .9; }
.ax-red { stroke: #b83030; stroke-width: .9; }
.dot-blue, .dot-red { stroke: #7e7e7a; stroke-width: 1; stroke-dasharray: 1 4; }
.dot-green { stroke: #9a9a94; stroke-width: 1; stroke-dasharray: 1 5; }
.cursor { fill: #111; stroke: #eee; stroke-width: .6; }

.trays { width: 23px; flex: none; padding: 4px 0 0 4px; background: #f0f0f0; }
.tray-tab { width: 19px; height: 54px; background: #f6f6f6; border: 1px solid #c8c8c8; border-right: 0; writing-mode: vertical-rl; font-size: 12px; line-height: 18px; color: #555; padding-top: 2px; white-space: nowrap; overflow: hidden; }

.taskbar { height: 40px; flex: none; display: flex; align-items: stretch; border-top: 1px solid #39434e; background: #a6bdd8; position: relative; }
.start { width: 59px; display: flex; align-items: center; justify-content: center; background: #8195ac; }
.orb { width: 36px; height: 36px; margin-right: 5px; }
.task { display: flex; align-items: center; justify-content: center; height: 39px; border: 1px solid #5a6a7c; border-radius: 3px; background: linear-gradient(180deg, #d3dfec, #b4c6da); }
.task.active { width: 54px; }
.task.app { width: 59px; margin-left: 4px; background: linear-gradient(180deg, #e8eef5, #c6d4e4); }
.task-stack { width: 5px; height: 39px; border: 1px solid #5a6a7c; border-left: 0; border-radius: 0 3px 3px 0; background: #bfcfe0; }
.task-ic { width: 32px; height: 32px; }
.notify { margin-left: auto; width: 254px; display: flex; align-items: center; padding-left: 42px; position: relative; color: #fff; background: linear-gradient(90deg, rgba(110,128,150,0) 0, #7a8ca3 36px, #76889f 100%); }
.lang { font: 700 10px "Liberation Mono", monospace; width: 27px; margin-bottom: 6px; }
.up { width: 0; height: 0; border-left: 5px solid transparent; border-right: 5px solid transparent; border-bottom: 5px solid #e8eef4; margin: 0 9px 0 2px; }
.tray-ic { width: 18px; height: 18px; margin-right: 6px; }
.clock { display: flex; flex-direction: column; align-items: center; font: 12px "Open Sans", sans-serif; line-height: 18px; margin-left: 10px; width: 56px; }
.show-desktop { position: absolute; right: 0; top: 0; bottom: 0; width: 14px; background: linear-gradient(90deg, #4f5d6c, #7c8a99); border-left: 1px solid #333d48; }

.watermark { position: absolute; left: 1369px; top: 1020px; font-size: 32px; line-height: 40px; color: #f00808; white-space: nowrap; font-family: "Liberation Sans", "Noto Sans CJK SC", sans-serif; }
.wm-id { font-size: 34.8px; }
```
